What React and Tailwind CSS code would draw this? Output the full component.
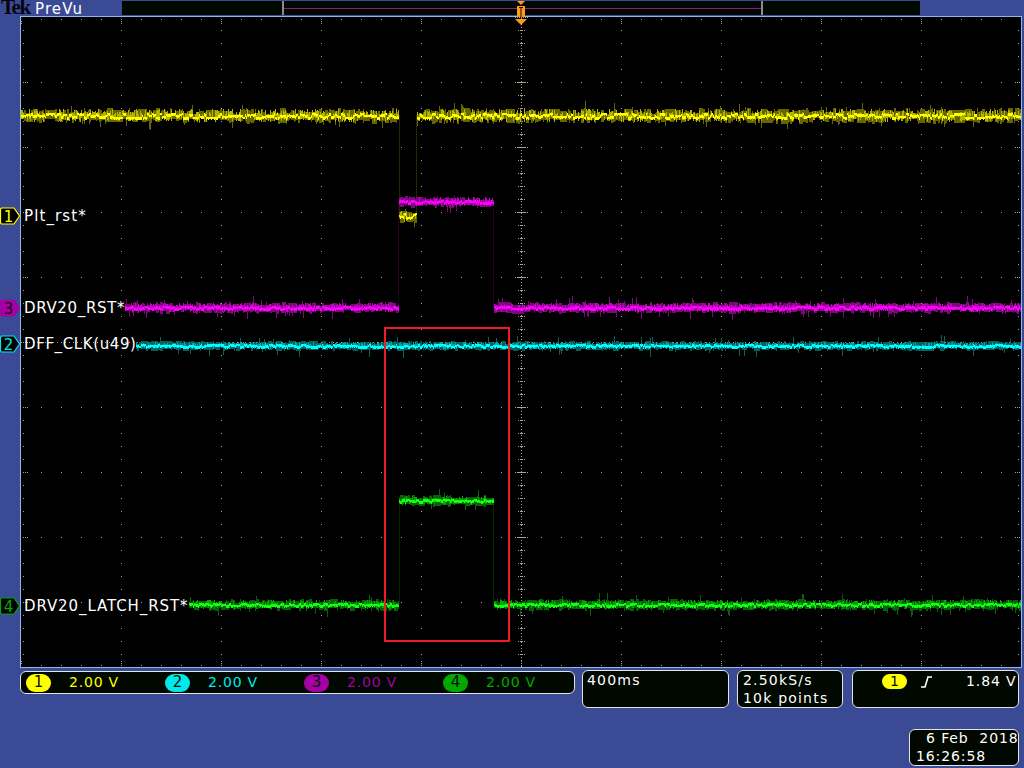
import { useMemo } from 'react';

const mono = 'font-["DejaVu_Sans",sans-serif]';

// small seeded random so the noise stays the same on every render
function rng(seed) {
  let s = seed;
  return () => {
    s = (s + 0x6d2b79f5) | 0;
    let t = Math.imul(s ^ (s >>> 15), 1 | s);
    t = (t + Math.imul(t ^ (t >>> 7), 61 | t)) ^ t;
    return ((t ^ (t >>> 14)) >>> 0) / 4294967296;
  };
}

// one column per pixel: dim envelope, patchy mid band, bright core
function noise(x0, x1, y, seed, spread, coreSize) {
  const r = rng(seed);
  let dim = '';
  let mid = '';
  let core = '';
  let up = 3;
  let down = 3;
  let c = 0;
  for (let x = x0; x <= x1; x++) {
    const px = x + 0.5;
    if (r() < 0.45) {
      up = 1 + Math.round(r() * spread);
      down = 2 + Math.round(r() * spread);
      c = Math.round((r() - 0.5) * coreSize);
    }
    let u = up;
    let d = down;
    if (r() < 0.035) u += 2 + Math.round(r() * 5);
    if (r() < 0.035) d += 2 + Math.round(r() * 5);
    dim += `M${px} ${y - u}V${y + d + 1}`;
    if (r() < 0.65) {
      mid += `M${px} ${y - Math.round(r() * (coreSize + 1))}V${y + 1 + Math.round(r() * (coreSize + 1))}`;
    }
    core += `M${px} ${y + c}V${y + c + 2 + Math.round(r() * 1.4)}`;
  }
  return { dim, mid, core };
}

function Trace({ segments, dim, mid, core, edge, edges, seed, spread, coreSize }) {
  const parts = useMemo(
    () => segments.map((s, i) => noise(s[0], s[1], s[2], seed + i, spread, coreSize)),
    [segments, seed, spread, coreSize],
  );
  return (
    <g shapeRendering="crispEdges" fill="none">
      {edges.map((e, i) => (
        <path key={i} d={`M${e[0] + 0.5} ${e[1]}V${e[2]}`} stroke={edge} />
      ))}
      {parts.map((p, i) => (
        <g key={i}>
          <path d={p.dim} stroke={dim} />
          <path d={p.mid} stroke={mid} />
          <path d={p.core} stroke={core} />
        </g>
      ))}
    </g>
  );
}

function Graticule() {
  const d = useMemo(() => {
    let fine = '';
    const dot = (x, y) => {
      fine += `M${x} ${y}h1v1h-1z`;
    };
    const rows = [];
    for (let y = 17; y <= 667; y += 65) rows.push(y);
    const cols = [];
    for (let x = 21; x <= 1021; x += 100) cols.push(x);
    rows.forEach((y) => {
      if (y === 17 || y === 667) return;
      for (let x = 41; x < 1021; x += 20) dot(x, y);
      dot(23, y);
      dot(25, y);
      dot(27, y);
      dot(1015, y);
      dot(1017, y);
      dot(1019, y);
    });
    cols.forEach((x) => {
      if (x === 21 || x === 1021) return;
      for (let y = 30; y < 667; y += 13) dot(x, y);
    });
    for (let x = 41; x < 1021; x += 20) {
      dot(x, 19);
      dot(x, 665);
    }
    cols.forEach((x) => {
      [21, 23, 661, 663].forEach((y) => dot(x, y));
    });
    for (let y = 30; y < 667; y += 13) {
      if ((y - 17) % 65 === 0) continue;
      dot(23, y);
      dot(1018, y);
    }
    // centre cross
    for (let y = 18; y < 667; y += 3) dot(521, y);
    for (let y = 30; y < 667; y += 13) {
      for (let k = -3; k <= 3; k += 2) dot(521 + k, y);
    }
    rows.forEach((y) => {
      for (let k = -6; k <= 6; k += 2) dot(521 + k, y);
    });
    for (let x = 21; x < 1021; x += 4) dot(x, 342);
    return fine;
  }, []);
  return <path d={d} fill="#aaa58c" shapeRendering="crispEdges" />;
}

const yellowSeg = [
  [21, 398, 115],
  [417, 1020, 115],
  [399, 416, 215],
];
const yellowEdge = [
  [399, 115, 215],
  [416, 115, 215],
];
const magentaSeg = [
  [125, 398, 307],
  [399, 493, 201],
  [494, 1020, 307],
];
const magentaEdge = [
  [398, 201, 307],
  [493, 201, 307],
];
const cyanSeg = [[136, 1020, 345]];
const greenSeg = [
  [189, 398, 604],
  [399, 493, 500],
  [494, 1020, 604],
];
const greenEdge = [
  [399, 500, 604],
  [493, 500, 604],
];

function Tag({ n, color, filled, className }) {
  return (
    <svg width="21" height="18" viewBox="0 0 21 18" className={`absolute left-0 ${className}`}>
      <path
        d="M1.5 1H14L19.5 9 14 17H1.5L0.5 16V2Z"
        fill={filled ? color : '#000'}
        stroke={color}
        strokeWidth="1.2"
      />
      <text
        x="8.5"
        y="14.5"
        textAnchor="middle"
        fontSize="15"
        fontFamily="DejaVu Sans, sans-serif"
        fill={filled ? '#16001a' : color}
      >
        {n}
      </text>
    </svg>
  );
}

function Channel({ n, pill, text, className }) {
  return (
    <div className={`flex items-center ${className}`}>
      <div className={`flex h-[18px] w-[25px] items-center justify-center rounded-full text-[15px] text-[#06120a] ${pill}`}>
        {n}
      </div>
      <div className={`ml-[18px] text-[14px] tracking-[0.8px] ${text}`}>2.00 V</div>
    </div>
  );
}

function Label({ className, children }) {
  return (
    <div className={`absolute left-[3px] text-[15px] leading-4 text-white ${className}`}>
      {children}
    </div>
  );
}

export default function App() {
  return (
    <div className={`h-[768px] w-[1024px] overflow-hidden bg-[#3b4a94] ${mono}`}>
      <div className="relative flex h-4 items-start">
        <div className='ml-px w-[34px] font-["Liberation_Serif",serif] text-[21px] leading-[15px] font-bold tracking-[-1.5px] text-[#05050f]'>
          Tek
        </div>
        <div className="w-[87px] text-[15px] leading-[18px] tracking-[1.1px] text-white">PreVu</div>
        <div className="mt-px flex h-[14px] w-[798px] bg-[#000800] pl-[160px]">
          <div className="relative h-full w-[481px] border-x-2 border-[#8c8c8c]">
            <div className="mt-[7px] h-px bg-[#8c1a8c]" />
          </div>
        </div>
        <svg width="14" height="27" viewBox="0 0 14 27" className="absolute top-0 left-[514px] z-10">
          <path d="M3 1h8L7 5Z" fill="#ff9a1a" />
          <rect x="3" y="6" width="8" height="11" fill="#ff9a1a" />
          <path d="M5 7.5h4M7 7.5V17" stroke="#101010" strokeWidth="1" fill="none" />
          <path d="M1 19h12L7 25Z" fill="#ff9a1a" />
        </svg>
      </div>

      <div className="relative">
        <div className="relative ml-5 h-[652px] w-[1002px] border border-[#8db8ee] bg-black">
          <svg width="1000" height="650" viewBox="21 17 1000 650" className="block">
            <Graticule />
            <Trace segments={yellowSeg} edges={yellowEdge} dim="#666600" mid="#b4b400" core="#ffff00" edge="#262600" seed={11} spread={6} coreSize={5} />
            <Trace segments={magentaSeg} edges={magentaEdge} dim="#7a0a7a" mid="#c800c8" core="#ff00ff" edge="#240024" seed={47} spread={4} coreSize={3} />
            <Trace segments={cyanSeg} edges={[]} dim="#0a5e5e" mid="#00a8a8" core="#00ffff" edge="#003030" seed={83} spread={3} coreSize={2} />
            <Trace segments={greenSeg} edges={greenEdge} dim="#0a600a" mid="#00a800" core="#14ff14" edge="#002600" seed={29} spread={4} coreSize={3} />
            <rect x="384.5" y="328" width="124" height="312.5" fill="none" stroke="#ee1c25" strokeWidth="2" shapeRendering="crispEdges" />
          </svg>
          <Label className="top-[191px] tracking-[1.1px]">Plt_rst*</Label>
          <Label className="top-[283px] tracking-[0.65px]">DRV20_RST*</Label>
          <Label className="top-[319px] tracking-[0.6px]">DFF_CLK(u49)</Label>
          <Label className="top-[581px] tracking-[0.9px]">DRV20_LATCH_RST*</Label>
        </div>
        <Tag n="1" color="#ffff00" className="top-[191px]" />
        <Tag n="3" color="#a400a4" filled className="top-[283px]" />
        <Tag n="2" color="#00e8e8" className="top-[319px]" />
        <Tag n="4" color="#00a800" className="top-[581px]" />
      </div>

      <div className="mt-[2px] flex items-start text-white">
        <div className="mt-px ml-5 flex h-[23px] w-[555px] items-center rounded-[6px] border border-[#e4e4e4] bg-[#000800] pl-[5px]">
          <Channel n="1" pill="bg-[#ffff00]" text="text-[#ffff00]" className="w-[139px]" />
          <Channel n="2" pill="bg-[#00e8e8]" text="text-[#00e8e8]" className="w-[139px]" />
          <Channel n="3" pill="bg-[#a400a4]" text="text-[#a400a4]" className="w-[139px]" />
          <Channel n="4" pill="bg-[#00a800]" text="text-[#00a800]" />
        </div>
        <div className="ml-[7px] h-[38px] w-[147px] rounded-[6px] border border-[#e4e4e4] bg-[#000800] pl-[4px] text-[14px] leading-[18px] tracking-[1.2px]">
          400ms
        </div>
        <div className="ml-2 h-[38px] w-[106px] rounded-[6px] border border-[#e4e4e4] bg-[#000800] pl-[5px] text-[14px] leading-[18px] tracking-[1.2px]">
          <div>2.50kS/s</div>
          <div>10k points</div>
        </div>
        <div className="ml-[9px] flex h-[38px] w-[167px] items-start rounded-[6px] border border-[#e4e4e4] bg-[#000800] pt-[3px] pl-[29px] text-[14px] leading-[15px]">
          <div className="flex h-[15px] w-[25px] items-center justify-center rounded-full bg-[#ffff00] text-[#06120a]">1</div>
          <svg width="13" height="13" viewBox="0 0 13 13" className="mt-px ml-[13px]">
            <path d="M1 12H5L8 2H12" fill="none" stroke="#fff" strokeWidth="1.6" />
          </svg>
          <div className="ml-[33px] tracking-[0.9px]">1.84 V</div>
        </div>
      </div>

      <div className="mt-[21px] flex justify-end pr-[5px] text-white">
        <div className="h-[37px] w-[110px] rounded-[6px] border border-[#e4e4e4] bg-[#000800] pl-[6px] text-[14px] leading-[17px] tracking-[0.9px]">
          <div className="pl-[10px] whitespace-pre">6 Feb  2018</div>
          <div className="mt-px">16:26:58</div>
        </div>
      </div>
    </div>
  );
}
